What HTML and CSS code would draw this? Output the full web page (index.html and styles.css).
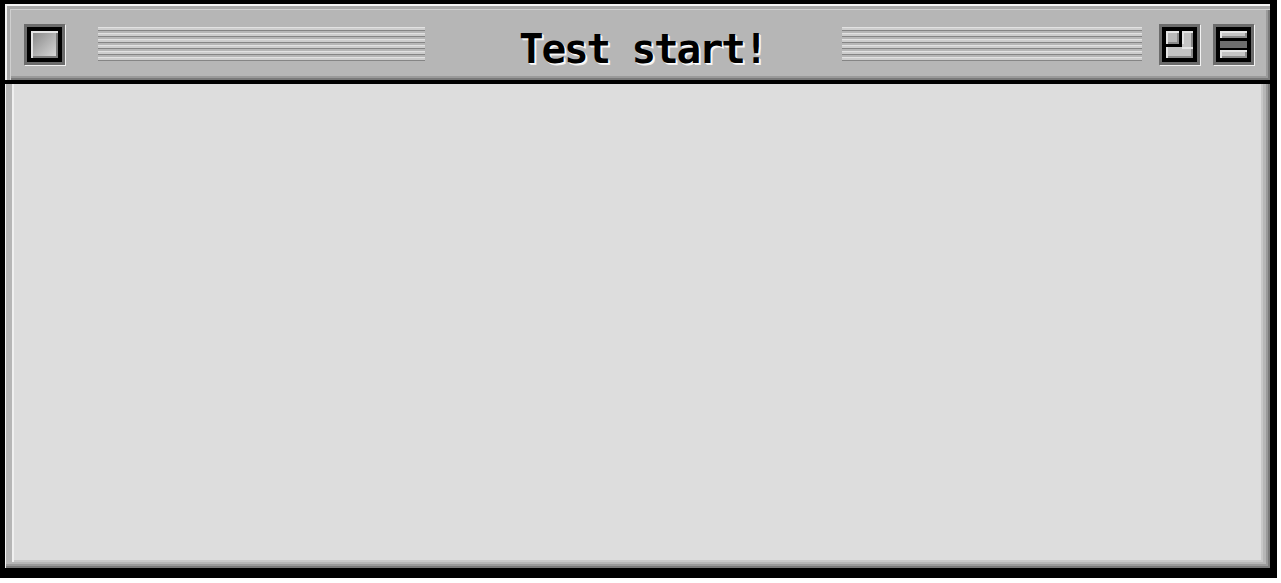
FILE: index.html
```html
<!DOCTYPE html>
<html>
<head>
<meta charset="utf-8">
<title>Test start!</title>
<link rel="stylesheet" href="styles.css">
</head>
<body>
<div class="window">
  <div class="titlebar">
    <svg class="box close" width="42" height="42" viewBox="0 0 42 42">
      <defs>
        <linearGradient id="cg" x1="0" y1="0" x2="1" y2="1">
          <stop offset="0" stop-color="#8a8a8a"/>
          <stop offset="1" stop-color="#d6d6d6"/>
        </linearGradient>
      </defs>
      <rect x="1" y="1" width="41" height="41" fill="#f2f2f2"/>
      <rect x="0" y="0" width="41" height="41" fill="#6c6c6c"/>
      <rect x="3" y="3" width="35" height="35" fill="#000"/>
      <rect x="7" y="7" width="27" height="27" fill="#e4e4e4"/>
      <rect x="9" y="9" width="25" height="25" fill="#7a7a7a"/>
      <rect x="9" y="9" width="23" height="23" fill="url(#cg)"/>
    </svg>
    <div class="stripes left"></div>
    <div class="title">Test start!</div>
    <div class="stripes right"></div>
    <svg class="box zoom" width="42" height="42" viewBox="0 0 42 42">
      <rect x="1" y="1" width="41" height="41" fill="#f2f2f2"/>
      <rect x="0" y="0" width="41" height="41" fill="#6c6c6c"/>
      <rect x="3" y="3" width="35" height="35" fill="#000"/>
      <rect x="7" y="7" width="27" height="27" fill="#e4e4e4"/>
      <rect x="9" y="9" width="25" height="25" fill="#8a8a8a"/>
      <rect x="9" y="9" width="23" height="23" fill="#c4c4c4"/>
      <rect x="20" y="7" width="3" height="16" fill="#000"/>
      <rect x="7" y="20" width="16" height="3" fill="#000"/>
      <rect x="9" y="9" width="9" height="9" fill="#b8b8b8"/>
      <rect x="18" y="9" width="2" height="11" fill="#8a8a8a"/>
      <rect x="9" y="18" width="11" height="2" fill="#8a8a8a"/>
      <rect x="23" y="23" width="11" height="2" fill="#e4e4e4"/>
      <rect x="23" y="9" width="2" height="11" fill="#e4e4e4"/>
    </svg>
    <svg class="box collapse" width="42" height="42" viewBox="0 0 42 42">
      <rect x="1" y="1" width="41" height="41" fill="#f2f2f2"/>
      <rect x="0" y="0" width="41" height="41" fill="#6c6c6c"/>
      <rect x="3" y="3" width="35" height="35" fill="#000"/>
      <rect x="7" y="7" width="27" height="7" fill="#e4e4e4"/>
      <rect x="9" y="9" width="25" height="5" fill="#8a8a8a"/>
      <rect x="9" y="9" width="23" height="3" fill="#c4c4c4"/>
      <rect x="7" y="17" width="27" height="7" fill="#6e6e6e"/>
      <rect x="7" y="26" width="27" height="8" fill="#e4e4e4"/>
      <rect x="9" y="28" width="25" height="6" fill="#8a8a8a"/>
      <rect x="9" y="28" width="23" height="4" fill="#c4c4c4"/>
    </svg>
  </div>
  <div class="frame">
    <div class="content"></div>
  </div>
</div>
</body>
</html>
```

FILE: styles.css
```css
html, body {
  margin: 0;
  padding: 0;
  background: #ffffff;
}

.window {
  width: 1265px;
  height: 564px;
  border-style: solid;
  border-color: #000;
  border-width: 4px 7px 10px 5px;
  background: #000;
  display: flex;
  flex-direction: column;
}

.titlebar {
  height: 76px;
  flex: none;
  box-sizing: border-box;
  background: #b6b6b6;
  box-shadow: inset 2px 2px 0 #f4f4f4, inset 5px 5px 0 #a8a8a8, inset 6px 6px 0 #d0d0d0, inset -2px -2px 0 #7a7a7a, inset -4px -4px 0 #9a9a9a;
  display: flex;
  align-items: flex-start;
  padding: 20px 15px 0 19px;
  margin-bottom: 4px;
}

.box {
  display: block;
  flex: none;
}

.stripes {
  flex: none;
  height: 36px;
  margin-top: 3px;
  background: repeating-linear-gradient(to bottom,
    #e2e2e2 0px, #e2e2e2 1px,
    #cdcdcd 1px, #cdcdcd 3px,
    #858585 3px, #858585 4px,
    transparent 4px, transparent 6px);
}

.stripes.left {
  width: 327px;
  margin-left: 32px;
}

.stripes.right {
  width: 300px;
  margin-right: 17px;
}

.title {
  flex: 1;
  margin-top: 3px;
  padding-left: 94px;
  font-family: "DejaVu Sans Mono", "Liberation Mono", monospace;
  font-weight: bold;
  font-size: 41px;
  line-height: 44px;
  letter-spacing: -2.2px;
  color: #000;
  text-shadow: 1px 1px 0 #fff, 2px 2px 0 #f0f0f0;
  white-space: nowrap;
}

.zoom {
  margin-right: 12px;
}

.frame {
  flex: 1;
  background: #b6b6b6;
  box-shadow: inset 1px 0 0 #f4f4f4, inset -2px -2px 0 #7a7a7a, inset -4px -4px 0 #9a9a9a;
  padding: 0 7px 6px 7px;
  display: flex;
}

.content {
  flex: 1;
  background: #dddddd;
  box-shadow: inset 2px 0 0 #f0f0f0, inset -2px -2px 0 #c8c8c8;
}
```
